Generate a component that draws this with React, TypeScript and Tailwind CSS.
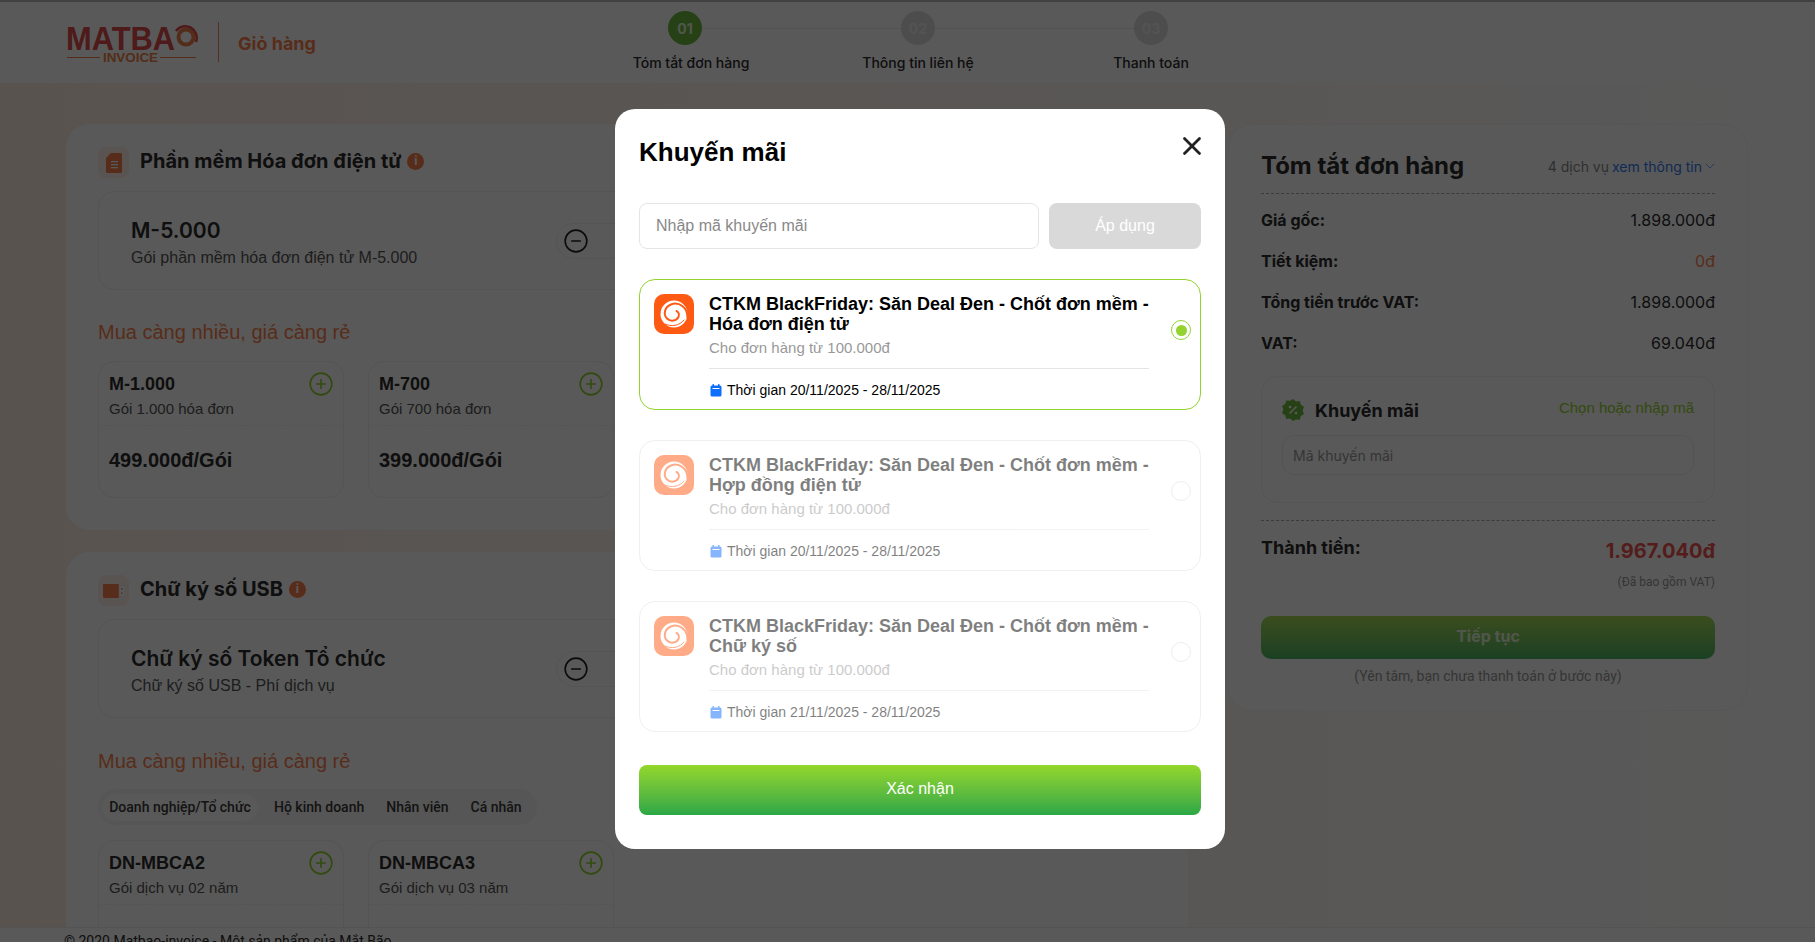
import { ChevronDown, CircleMinus, CirclePlus, X } from 'lucide-react';

const Swirl = () => (
  <svg viewBox="0 0 40 40" className="w-full h-full" fill="none">
    <circle cx="20" cy="20" r="13.5" fill="#fff" />
    <path d="M33.5 24C34 13 24.5 7.5 17 10.5C10.5 13 9 20.5 13 24.5C16.5 28 22.5 27 24.5 23C25.5 20.5 24.5 18 22.5 17" stroke="#ff5a14" strokeWidth="2" strokeLinecap="round" />
    <path d="M11 30C17 33 25.5 32 30 26" stroke="#ff5a14" strokeWidth="1" strokeLinecap="round" />
  </svg>
);

const CalendarIcon = () => (
  <svg viewBox="0 0 12 13" className="w-[12px] h-[13px] shrink-0">
    <rect x="0.5" y="1.5" width="11" height="11" rx="1.5" fill="#0d6efd" />
    <rect x="2.5" y="0" width="1.5" height="3" rx="0.5" fill="#0d6efd" />
    <rect x="8" y="0" width="1.5" height="3" rx="0.5" fill="#0d6efd" />
    <rect x="2.5" y="4" width="7" height="1" fill="#fff" />
  </svg>
);

const InfoDot = () => (
  <span className="-mt-[3px] w-[17px] h-[17px] rounded-full bg-[#fc7f4c] flex items-center justify-center text-white text-[12px] font-bold leading-none">i</span>
);

function SectionTitle({ title, usb }: { title: string; usb?: boolean }) {
  return (
    <div className="flex items-center">
      <div className="w-[31px] h-[31px] rounded-lg bg-[#fff0e8] flex items-center justify-center">
        {usb ? (
          <svg viewBox="0 0 22 14" className="w-[22px] h-[14px]">
            <rect x="0" y="0" width="16" height="14" rx="1" fill="#fc7f4c" />
            <rect x="16" y="1.5" width="6" height="11" fill="#fff" stroke="#ddd" strokeWidth="0.5" />
            <rect x="18" y="4" width="1.5" height="1.5" fill="#fc7f4c" />
            <rect x="18" y="8.5" width="1.5" height="1.5" fill="#fc7f4c" />
          </svg>
        ) : (
          <svg viewBox="0 0 16 20" className="w-[16px] h-[20px]">
            <path d="M5 0H14.5C15.3 0 16 .7 16 1.5V18.5C16 19.3 15.3 20 14.5 20H1.5C.7 20 0 19.3 0 18.5V5Z" fill="#fc7f4c" />
            <rect x="5" y="8" width="7" height="1.3" fill="#fff" />
            <rect x="5" y="11" width="7" height="1.3" fill="#fff" />
            <rect x="5" y="14" width="7" height="1.3" fill="#fff" />
          </svg>
        )}
      </div>
      <h2 className="ml-[11px] mr-[6px] -mt-[3px] text-[20px] leading-[30px] font-bold text-[#2b2b2b]">{title}</h2>
      <InfoDot />
    </div>
  );
}

function Selected({ name, desc }: { name: string; desc: string }) {
  return (
    <div className="mt-[13px] h-[99px] rounded-2xl border border-[#f0f0f0] pl-[32px] flex items-center">
      <div className="w-[425px] pt-[5px]">
        <div className="text-[21px] leading-[30px] font-semibold text-[#2b2b2b]">{name}</div>
        <div className="text-[16px] leading-[24px] text-[#555] font-['Liberation_Sans',sans-serif]">{desc}</div>
      </div>
      <div className="w-[150px] h-[36px] rounded-full border border-[#f0f0f0] flex items-center justify-between px-[6px]">
        <CircleMinus size={26} strokeWidth={1.5} className="text-[#222]" />
        <span className="text-[16px] text-[#222]">1</span>
        <CirclePlus size={26} strokeWidth={1.5} className="text-[#222]" />
      </div>
    </div>
  );
}

function PlanCard({ name, desc, price }: { name: string; desc: string; price?: string }) {
  return (
    <div className="w-[246px] h-[137px] rounded-2xl border border-[#f0f0f0] shrink-0 font-['Liberation_Sans',sans-serif]">
      <div className="pl-[10px] pr-[9px] pt-[9px] flex items-start justify-between">
        <div className="text-[18px] leading-[26px] font-bold text-[#2b2b2b]">{name}</div>
        <CirclePlus size={26} strokeWidth={1.5} className="text-[#8fd32a]" />
      </div>
      <div className="pl-[10px] text-[15px] leading-[24px] text-[#555]">{desc}</div>
      <div className="mt-[4px] border-t border-dashed border-[#f2f2f2]" />
      {price && <div className="pl-[10px] mt-[19px] text-[20px] leading-[30px] font-bold text-[#2b2b2b]">{price}</div>}
    </div>
  );
}

function PromoCard({ title, date, active }: { title: string; date: string; active?: boolean }) {
  return (
    <div className={`h-[130.5px] rounded-2xl border flex pl-[14px] pt-[14px] ${active ? 'border-[#93d32f]' : 'border-[#f0f0f0]'}`}>
      <div className={`flex gap-[15px] ${active ? '' : 'opacity-50'}`}>
        <div className="w-[40px] h-[40px] rounded-[10px] bg-[#ff5a14] shrink-0">
          <Swirl />
        </div>
        <div className="w-[440px]">
          <div className="text-[18px] leading-[20px] font-bold text-black">CTKM BlackFriday: Săn Deal Đen - Chốt đơn mềm - {title}</div>
          <div className="mt-[4px] text-[15px] leading-[20px] text-[#999]">Cho đơn hàng từ 100.000đ</div>
          <div className="mt-[10px] border-t border-[#e5e5e5]" />
          <div className="mt-[11px] flex items-center gap-[5px] pl-[1px] text-[14px] leading-[20px] text-black">
            <CalendarIcon />
            Thời gian {date}
          </div>
        </div>
      </div>
      <div className={`ml-[22px] mt-[26px] w-[20px] h-[20px] rounded-full border flex items-center justify-center ${active ? 'border-[#93d32f]' : 'border-[#eee]'}`}>
        {active && <div className="w-[11px] h-[11px] rounded-full bg-[#93d32f]" />}
      </div>
    </div>
  );
}

function Row({ label, value, orange }: { label: string; value: string; orange?: boolean }) {
  return (
    <div className="flex items-center justify-between h-[41px]">
      <span className="text-[16px] font-bold text-[#2b2b2b]">{label}</span>
      <span className={`text-[16px] ${orange ? 'text-[#fc7f4c]' : 'text-[#2b2b2b]'}`}>{value}</span>
    </div>
  );
}

function Step({ no, label, active }: { no: string; label: string; active?: boolean }) {
  return (
    <div className="flex flex-col items-center w-[160px] relative">
      <div className={`w-[34px] h-[34px] rounded-full flex items-center justify-center text-[14px] font-bold ${active ? 'bg-[#6fbb3f] text-[#e8f5d8]' : 'bg-[#dcdcdc] text-[#eee]'}`}>{no}</div>
      <div className={`mt-[8px] text-[14px] leading-[20px] font-medium text-[#2b2b2b] ${active ? 'ml-[12px]' : ''}`}>{label}</div>
    </div>
  );
}

export default function App() {
  return (
    <div className="relative h-screen overflow-hidden bg-gradient-to-r from-[#ffeee4] to-white text-[#2b2b2b] font-['Inter',sans-serif]">
      <header className="h-[83px] bg-white border-t-2 border-[#bbb] flex items-start pl-[66px]">
        <div className="mt-[20px] w-[130px] h-[42px]">
          <svg viewBox="0 0 130 42" className="w-full h-full overflow-visible">
            <text x="0" y="28" textLength="109" lengthAdjust="spacingAndGlyphs" fontFamily="Liberation Sans" fontWeight="700" fontSize="34" fill="#e04a4c">MATBA</text>
            <circle cx="120" cy="15" r="7.5" fill="none" stroke="#f0804a" strokeWidth="4" />
            <path d="M110 9A11.5 11.5 0 0 1 130 20" fill="none" stroke="#e04a4c" strokeWidth="2.5" />
            <text x="37" y="40" textLength="55" lengthAdjust="spacingAndGlyphs" fontFamily="Liberation Sans" fontWeight="700" fontSize="13" fill="#f0804a">INVOICE</text>
            <rect x="1" y="35" width="33" height="1" fill="#f0804a" />
            <rect x="94" y="35" width="36" height="1" fill="#f0804a" />
          </svg>
        </div>
        <div className="ml-[22px] mt-[20px] w-[1px] h-[40px] bg-[#f08a5a]" />
        <div className="ml-[19px] mt-[28px] text-[18px] leading-[28px] font-bold text-[#fc7f4c]">Giỏ hàng</div>
        <div className="absolute left-[605px] top-[11px] w-[626px] flex justify-between">
          <div className="absolute left-[80px] right-[80px] top-[17px] h-[1px] bg-[#eee]" />
          <Step no="01" label="Tóm tắt đơn hàng" active />
          <Step no="02" label="Thông tin liên hệ" />
          <Step no="03" label="Thanh toán" />
        </div>
      </header>

      <main className="flex gap-[40px] pl-[66px] pt-[41px]">
        <div className="w-[1122px] shrink-0 flex flex-col gap-[22px]">
          <section className="h-[406px] rounded-[24px] bg-white px-[32px] pt-[23px]">
            <SectionTitle title="Phần mềm Hóa đơn điện tử" />
            <Selected name="M-5.000" desc="Gói phần mềm hóa đơn điện tử M-5.000" />
            <div className="mt-[27px] text-[20px] leading-[30px] text-[#fc7f4c] font-['Liberation_Sans',sans-serif]">Mua càng nhiều, giá càng rẻ</div>
            <div className="mt-[14px] flex gap-[24px]">
              <PlanCard name="M-1.000" desc="Gói 1.000 hóa đơn" price="499.000đ/Gói" />
              <PlanCard name="M-700" desc="Gói 700 hóa đơn" price="399.000đ/Gói" />
            </div>
          </section>
          <section className="rounded-[24px] bg-white px-[32px] pt-[23px] pb-[40px]">
            <SectionTitle title="Chữ ký số USB" usb />
            <Selected name="Chữ ký số Token Tổ chức" desc="Chữ ký số USB - Phí dịch vụ" />
            <div className="mt-[28px] text-[20px] leading-[30px] text-[#fc7f4c] font-['Liberation_Sans',sans-serif]">Mua càng nhiều, giá càng rẻ</div>
            <div className="mt-[13px] w-[439px] h-[36px] rounded-full bg-[#f5f5f5] flex items-center px-[4px] text-[14px] font-medium text-[#3a3a3a] whitespace-nowrap font-['Roboto',sans-serif]">
              <div className="w-[156px] h-[27px] rounded-full bg-white flex items-center justify-center">Doanh nghiệp/Tổ chức</div>
              <div className="ml-[16px]">Hộ kinh doanh</div>
              <div className="ml-[22px]">Nhân viên</div>
              <div className="ml-[22px]">Cá nhân</div>
            </div>
            <div className="mt-[15px] flex gap-[24px]">
              <PlanCard name="DN-MBCA2" desc="Gói dịch vụ 02 năm" />
              <PlanCard name="DN-MBCA3" desc="Gói dịch vụ 03 năm" />
            </div>
          </section>
        </div>

        <aside className="w-[520px] h-[587px] shrink-0 rounded-[24px] bg-white border border-[#f5f5f5] px-[32px] pt-[25px]">
          <div className="flex items-center justify-between h-[32px]">
            <h2 className="text-[24px] leading-[32px] font-bold text-[#2b2b2b]">Tóm tắt đơn hàng</h2>
            <div className="flex items-center text-[14px]">
              <span className="text-[#888]">4 dịch vụ</span>
              <span className="ml-[3px] text-[#2f7bf0]">xem thông tin</span>
              <ChevronDown size={16} strokeWidth={1} className="-mr-[3px] text-[#2f7bf0]" />
            </div>
          </div>
          <div className="mt-[11px] mb-[5px] border-t border-dashed border-[#aaa]" />
          <Row label="Giá gốc:" value="1.898.000đ" />
          <Row label="Tiết kiệm:" value="0đ" orange />
          <Row label="Tổng tiền trước VAT:" value="1.898.000đ" />
          <Row label="VAT:" value="69.040đ" />
          <div className="mt-[13px] h-[127px] rounded-2xl border border-[#f0f0f0] px-[20px] pt-[20px]">
            <div className="flex items-center justify-between h-[26px]">
              <div className="flex items-center gap-[10px]">
                <svg viewBox="0 0 24 24" className="w-[24px] h-[24px] -ml-[1px]">
                  <path d="M12 1l3 2.4 3.8-.4 1 3.7 3.2 2.1-1.4 3.6 1.4 3.6-3.2 2.1-1 3.7-3.8-.4L12 23l-3-2.4-3.8.4-1-3.7L1 15.2 2.4 11.6 1 8l3.2-1.9 1-3.7 3.8.4z" fill="#6fbb3f" />
                  <path d="M8.5 15.5l7-7" stroke="#fff" strokeWidth="1.4" />
                  <circle cx="9" cy="9" r="1.3" fill="#fff" />
                  <circle cx="15" cy="15" r="1.3" fill="#fff" />
                </svg>
                <span className="text-[18px] font-bold text-[#2b2b2b]">Khuyến mãi</span>
              </div>
              <span className="mb-[4px] text-[15px] text-[#93d32f] font-['Liberation_Sans',sans-serif]">Chọn hoặc nhập mã</span>
            </div>
            <div className="mt-[12px] h-[40px] rounded-xl border border-[#eee] flex items-center pl-[10px] text-[14px] text-[#999]">Mã khuyến mãi</div>
          </div>
          <div className="mt-[17px] border-t border-dashed border-[#aaa]" />
          <div className="mt-[15px] flex justify-between items-start">
            <span className="text-[18px] leading-[24px] font-bold text-[#2b2b2b]">Thành tiền:</span>
            <span className="text-[20px] leading-[30px] font-bold text-[#ef5350]">1.967.040đ</span>
          </div>
          <div className="mt-[8px] text-right text-[12px] leading-[16px] text-[#999] font-['Roboto',sans-serif]">(Đã bao gồm VAT)</div>
          <div className="mt-[26px] h-[43px] pb-[3px] rounded-[10px] bg-gradient-to-b from-[#a8dc55] to-[#4cb765] flex items-center justify-center text-[16px] font-bold text-[#e8f5d8]">Tiếp tục</div>
          <div className="mt-[7px] text-center text-[14px] leading-[20px] text-[#999] font-['Roboto',sans-serif]">(Yên tâm, bạn chưa thanh toán ở bước này)</div>
        </aside>
      </main>

      <footer className="absolute left-0 right-0 top-[927px] h-[15px] bg-white border-t border-[#eee] pl-[64px] pt-[3px] text-[14px] leading-[20px] text-[#2b2b2b] font-['Roboto',sans-serif]">© 2020 Matbao-invoice - Một sản phẩm của Mắt Bão.</footer>

      <div className="absolute inset-0 bg-black/65" />

      <div className="absolute left-[615px] top-[109px] w-[610px] h-[740px] rounded-[20px] bg-white px-[24px] pt-[25px] font-['Liberation_Sans',sans-serif]">
        <div className="flex items-center justify-between h-[36px]">
          <h2 className="text-[26px] leading-[36px] font-bold text-black">Khuyến mãi</h2>
          <X size={30} strokeWidth={2.2} className="text-[#222] -mr-[6px] -mt-[12px]" />
        </div>
        <div className="mt-[33px] flex gap-[10px]">
          <div className="w-[400px] h-[46px] rounded-lg border border-[#e5e5e5] flex items-center pl-[16px] text-[16px] text-[#888]">Nhập mã khuyến mãi</div>
          <div className="w-[152px] h-[46px] rounded-lg bg-[#d9d9d9] flex items-center justify-center text-[16px] text-white">Áp dụng</div>
        </div>
        <div className="mt-[30px] flex flex-col gap-[30.5px]">
          <PromoCard title="Hóa đơn điện tử" date="20/11/2025 - 28/11/2025" active />
          <PromoCard title="Hợp đồng điện tử" date="20/11/2025 - 28/11/2025" />
          <PromoCard title="Chữ ký số" date="21/11/2025 - 28/11/2025" />
        </div>
        <div className="mt-[33px] h-[50px] pb-[2px] rounded-lg bg-gradient-to-b from-[#93d72a] to-[#28a745] flex items-center justify-center text-[16px] font-medium text-white">Xác nhận</div>
      </div>
    </div>
  );
}
